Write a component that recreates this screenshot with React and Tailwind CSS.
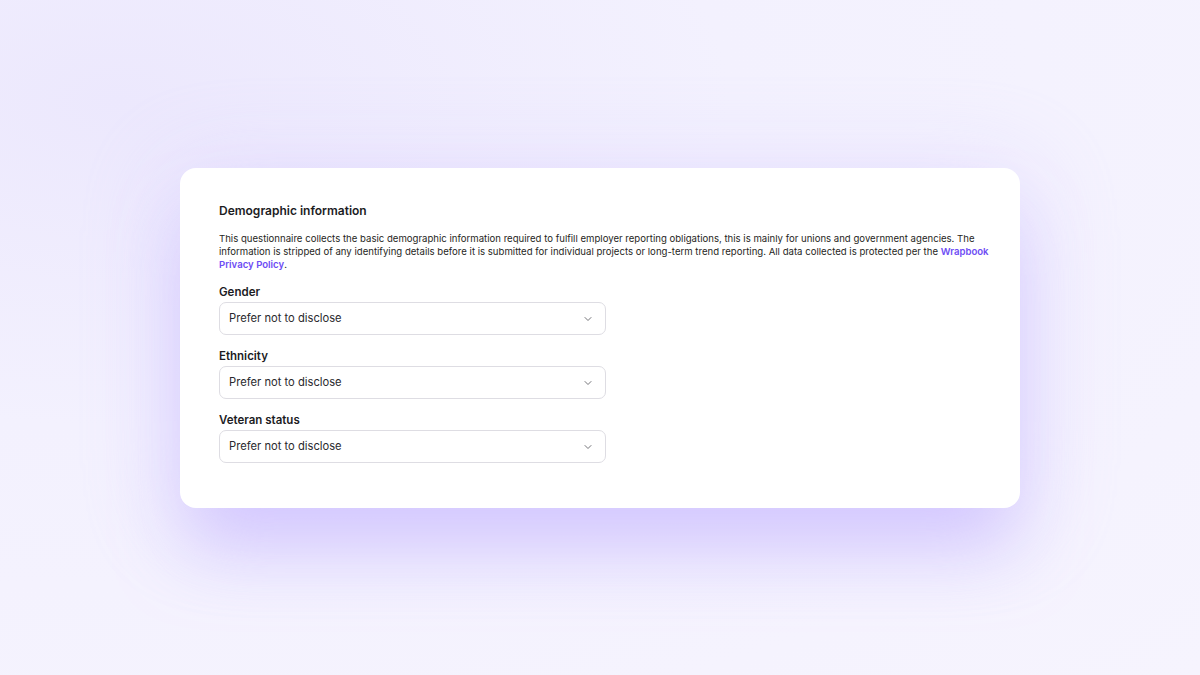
import { ChevronDown } from "lucide-react";

const fields = ["Gender", "Ethnicity", "Veteran status"];

const SelectField = ({ label }) => (
  <div className="flex flex-col">
    <label className="text-[11.5px] leading-[16px] font-semibold text-[#1c1c1f] mb-[2px]">{label}</label>
    <button className="flex items-center justify-between w-[387px] h-[33px] pl-[9px] pr-[11px] border border-[#dedde3] rounded-[7px] bg-white text-left">
      <span className="text-[11.2px] text-[#2a2a2e]">Prefer not to disclose</span>
      <ChevronDown size={12} strokeWidth={1.75} className="text-[#606066]" />
    </button>
  </div>
);

export default function App() {
  return (
    <div
      className="w-[1200px] h-[675px] overflow-hidden flex items-start justify-center pt-[168px] bg-[radial-gradient(ellipse_at_10%_15%,#ece8fd_0%,#f3f1fe_40%,#f6f4fe_100%)]"
      style={{ fontFamily: "Inter, 'Noto Sans', sans-serif" }}
    >
      <div className="w-[840px] h-[340px] bg-white rounded-[16px] pl-[39px] pr-[28px] pt-[35px] shadow-[0_50px_70px_-10px_rgba(200,185,255,0.65),0_10px_90px_10px_rgba(215,205,255,0.45)]">
        <h1 className="text-[12px] leading-[16px] font-semibold text-[#1c1c1f]">Demographic information</h1>
        <p className="mt-[13px] text-[9.6px] leading-[13px] text-[#1f1f23]">
          This questionnaire collects the basic demographic information required to fulfill employer reporting obligations, this is mainly for unions and government agencies. The information is stripped of any identifying details before it is submitted for individual projects or long-term trend reporting. All data collected is protected per the{" "}
          <a className="text-[#6d4cf4] font-semibold">Wrapbook Privacy Policy</a>.
        </p>
        <div className="mt-[13px] flex flex-col gap-[13px]">
          {fields.map((f) => (
            <SelectField key={f} label={f} />
          ))}
        </div>
      </div>
    </div>
  );
}
